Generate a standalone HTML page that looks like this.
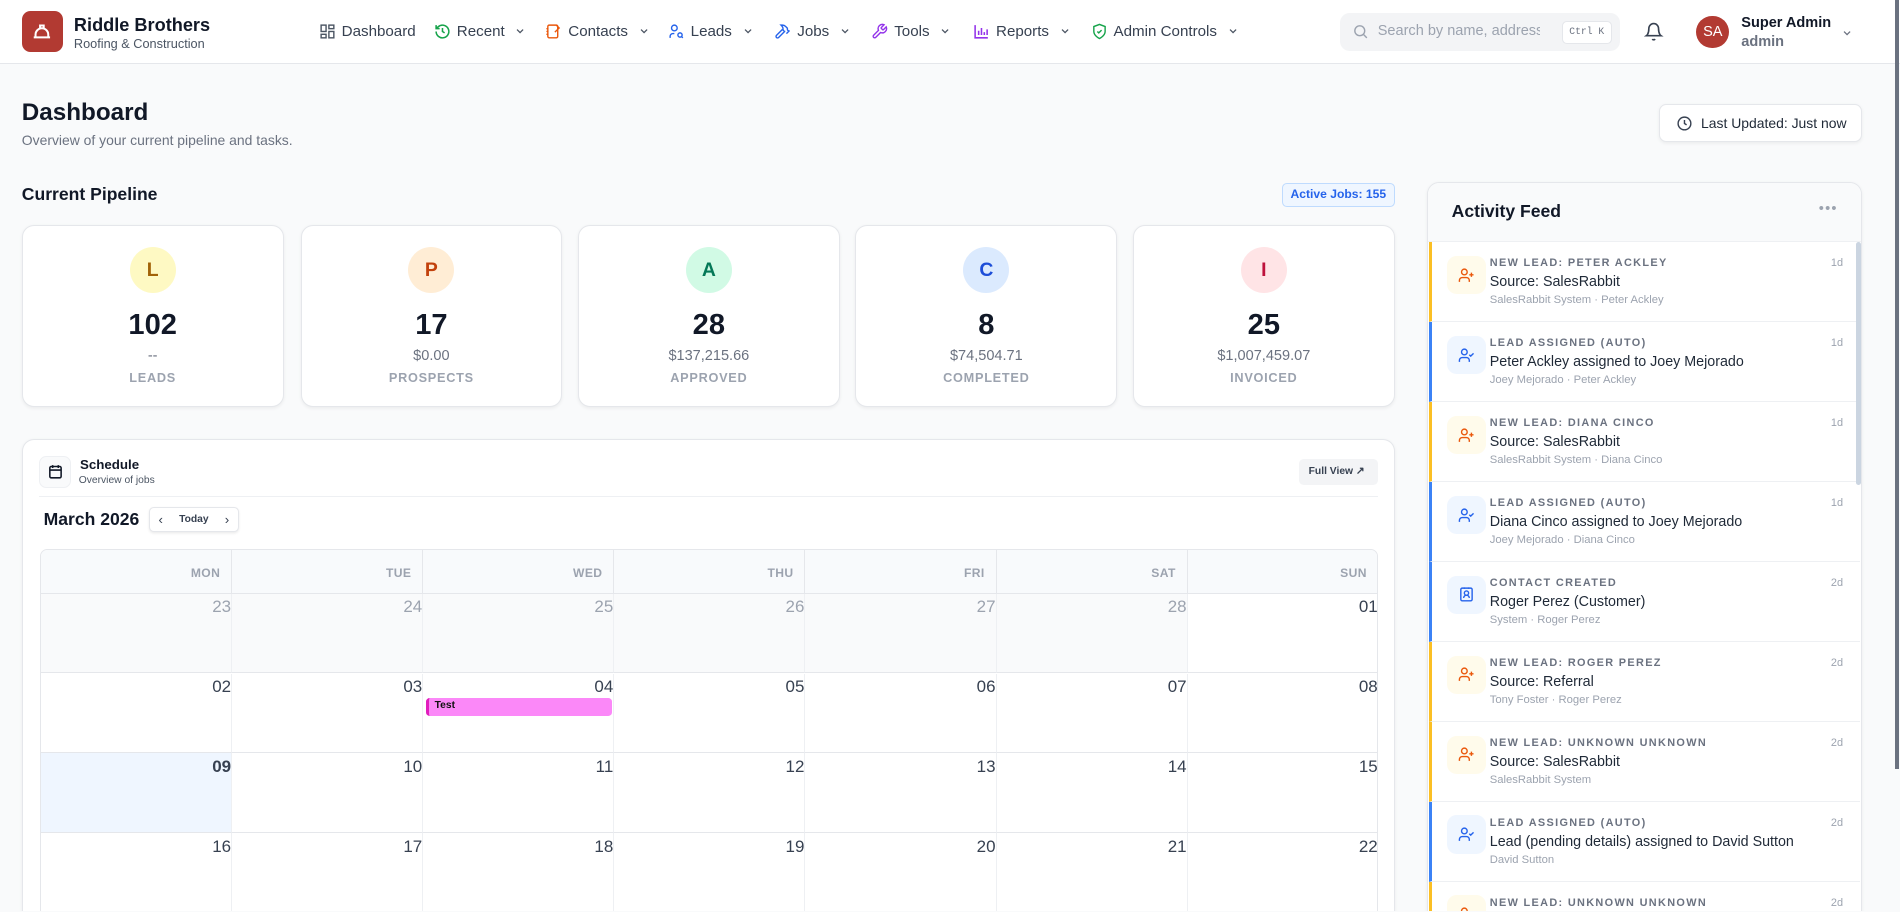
<!DOCTYPE html>
<html><head><meta charset="utf-8">
<style>
*{box-sizing:border-box;margin:0;padding:0}
html,body{width:1900px;height:912px;overflow:hidden;background:#f9fafb;font-family:"Liberation Sans",sans-serif;color:#111827}
#w{zoom:1.21173;width:1568px;height:752px;position:relative;overflow:hidden}
.a{position:absolute}
.hdr{left:0;top:0;width:1568px;height:53px;background:#fff;border-bottom:1px solid #e5e7eb}
.nav{top:19px;font-size:12.5px;color:#374151;display:flex;align-items:center;gap:5px;white-space:nowrap}
.nav svg{width:14px;height:14px}
.chev{width:10px!important;height:10px!important;margin-left:3px}
.card{background:#fff;border:1px solid #e5e7eb;border-radius:10px;box-shadow:0 1px 3px rgba(0,0,0,.06)}
.pc{top:186px;width:216px;height:150px;text-align:center}
.pc .c{width:38px;height:38px;border-radius:50%;margin:17px auto 0;font-size:16px;font-weight:bold;line-height:38px}
.pc .n{font-size:24px;font-weight:bold;margin-top:13px;color:#111827;line-height:28px}
.pc .m{font-size:12px;color:#6b7280;margin-top:4px}
.pc .l{font-size:10.5px;font-weight:bold;color:#9ca3af;letter-spacing:.6px;margin-top:5px}
.grid{left:33px;top:453px;width:1104px;height:299px;border:1px solid #e5e7eb;border-bottom:0;border-radius:6px 6px 0 0;overflow:hidden}
.dh{position:absolute;top:0;height:36px;background:#f8fafc;border-right:1px solid #e5e7eb;border-bottom:1px solid #e5e7eb;font-size:10px;font-weight:bold;color:#9ca3af;text-align:right;padding:13px 9px 0 0;letter-spacing:.3px}
.dc{position:absolute;height:66px;border-right:1px solid #eef0f3;border-bottom:1.5px solid #e5e7eb;font-size:14px;color:#374151;text-align:right;padding:3px 0 0 0}
.fi{left:1179px;width:356px;height:66px;border-bottom:1px solid #eef0f3;border-left:3px solid}
.fi .ic{position:absolute;left:13px;top:11px;width:32px;height:32px;border-radius:8px;display:flex;align-items:center;justify-content:center}
.fi .ic svg{width:14px;height:14px}
.fi .t{position:absolute;left:48px;top:12px;font-size:9px;font-weight:bold;color:#6b7280;letter-spacing:1.1px}
.fi .b{position:absolute;left:48px;top:26px;font-size:11.8px;color:#1f2937}
.fi .s{position:absolute;left:48px;top:43px;font-size:9.3px;color:#9ca3af}
.fi .d{position:absolute;right:14px;top:12px;font-size:9px;color:#9ca3af}
</style></head><body><div id="w">
<div class="a hdr"></div>
<div class="a" style="left:18px;top:9px;width:34px;height:34px;background:#b23a32;border-radius:7px;display:flex;align-items:center;justify-content:center">
<svg width="18" height="18" viewBox="0 0 24 24" fill="none" stroke="#fff" stroke-width="2.2"><path d="M3 18h18M5 18v-3a7 7 0 0 1 14 0v3M10 9V5h4v4"/></svg></div>
<div class="a" style="left:61px;top:12px;font-size:15px;font-weight:bold">Riddle Brothers</div>
<div class="a" style="left:61px;top:30px;font-size:10.5px;color:#4b5563">Roofing &amp; Construction</div>

<div class="a nav" style="left:263px"><svg viewBox="0 0 24 24" fill="none" stroke="#4b5563" stroke-width="2"><rect x="3" y="3" width="7" height="9"/><rect x="14" y="3" width="7" height="5"/><rect x="14" y="12" width="7" height="9"/><rect x="3" y="16" width="7" height="5"/></svg>Dashboard</div>
<div class="a nav" style="left:358px"><svg viewBox="0 0 24 24" fill="none" stroke="#16a34a" stroke-width="2.2"><path d="M3 12a9 9 0 1 0 3-6.7L3 8M3 3v5h5M12 7v5l3 2"/></svg>Recent<svg class="chev" viewBox="0 0 24 24" fill="none" stroke="#4b5563" stroke-width="2.5"><path d="M6 9l6 6 6-6"/></svg></div>
<div class="a nav" style="left:450px"><svg viewBox="0 0 24 24" fill="none" stroke="#ea580c" stroke-width="2"><rect x="4" y="3" width="14" height="18" rx="2"/><path d="M2 8h3M2 12h3M2 16h3M16 3l4 4-6 6"/></svg>Contacts<svg class="chev" viewBox="0 0 24 24" fill="none" stroke="#4b5563" stroke-width="2.5"><path d="M6 9l6 6 6-6"/></svg></div>
<div class="a nav" style="left:551px"><svg viewBox="0 0 24 24" fill="none" stroke="#2563eb" stroke-width="2"><circle cx="9" cy="7" r="4"/><path d="M3 21v-2a4 4 0 0 1 4-4h2"/><circle cx="17" cy="17" r="3"/><path d="M21 21l-2-2"/></svg>Leads<svg class="chev" viewBox="0 0 24 24" fill="none" stroke="#4b5563" stroke-width="2.5"><path d="M6 9l6 6 6-6"/></svg></div>
<div class="a nav" style="left:639px"><svg viewBox="0 0 24 24" fill="none" stroke="#2563eb" stroke-width="2"><path d="M15 12l-8.5 8.5a2.1 2.1 0 0 1-3-3L12 9M17.6 15L22 10.6M20.9 11.7l-1.3-1.3a2.4 2.4 0 0 1-.7-1.7V7.3L16.3 4.7A6 6 0 0 0 12 3h-2l1 1a6 6 0 0 1 1.8 4.3V10l2 2h1.2"/></svg>Jobs<svg class="chev" viewBox="0 0 24 24" fill="none" stroke="#4b5563" stroke-width="2.5"><path d="M6 9l6 6 6-6"/></svg></div>
<div class="a nav" style="left:719px"><svg viewBox="0 0 24 24" fill="none" stroke="#9333ea" stroke-width="2"><path d="M14.7 6.3a1 1 0 0 0 0 1.4l1.6 1.6a1 1 0 0 0 1.4 0l3.8-3.8a6 6 0 0 1-7.9 7.9l-6.9 6.9a2.1 2.1 0 0 1-3-3l6.9-6.9a6 6 0 0 1 7.9-7.9z"/></svg>Tools<svg class="chev" viewBox="0 0 24 24" fill="none" stroke="#4b5563" stroke-width="2.5"><path d="M6 9l6 6 6-6"/></svg></div>
<div class="a nav" style="left:803px"><svg viewBox="0 0 24 24" fill="none" stroke="#9333ea" stroke-width="2.2"><path d="M3 3v18h18M8 17V11M12 17V7M16 17v-4M20 17V9"/></svg>Reports<svg class="chev" viewBox="0 0 24 24" fill="none" stroke="#4b5563" stroke-width="2.5"><path d="M6 9l6 6 6-6"/></svg></div>
<div class="a nav" style="left:900px"><svg viewBox="0 0 24 24" fill="none" stroke="#16a34a" stroke-width="2"><path d="M12 22s8-4 8-10V5l-8-3-8 3v7c0 6 8 10 8 10z"/><path d="M9 12l2 2 4-4"/></svg>Admin Controls<svg class="chev" viewBox="0 0 24 24" fill="none" stroke="#4b5563" stroke-width="2.5"><path d="M6 9l6 6 6-6"/></svg></div>

<div class="a" style="left:1106px;top:11px;width:231px;height:31px;background:#f3f4f6;border-radius:8px"></div>
<svg class="a" style="left:1116px;top:19px" width="14" height="14" viewBox="0 0 24 24" fill="none" stroke="#9ca3af" stroke-width="2"><circle cx="11" cy="11" r="7"/><path d="M21 21l-5-5"/></svg>
<div class="a" style="left:1137px;top:19px;font-size:12px;color:#9ca3af;width:134px;overflow:hidden;white-space:nowrap">Search by name, address, phone</div>
<div class="a" style="left:1289px;top:17px;width:41px;height:19px;background:#fff;border:1px solid #e5e7eb;border-radius:4px;font-family:'Liberation Mono',monospace;font-size:8px;color:#6b7280;text-align:center;line-height:17px">Ctrl K</div>
<svg class="a" style="left:1357px;top:18px" width="16" height="16" viewBox="0 0 24 24" fill="none" stroke="#374151" stroke-width="2"><path d="M6 8a6 6 0 0 1 12 0c0 7 3 9 3 9H3s3-2 3-9M10.3 21a1.9 1.9 0 0 0 3.4 0"/></svg>
<div class="a" style="left:1400px;top:13px;width:27px;height:27px;border-radius:50%;background:#b23a32;color:#fff;font-size:12px;text-align:center;line-height:27px">SA</div>
<div class="a" style="left:1437px;top:12px;font-size:12px;font-weight:bold">Super Admin</div>
<div class="a" style="left:1437px;top:28px;font-size:12px;font-weight:bold;color:#6b7280">admin</div>
<svg class="a" style="left:1519px;top:22px" width="10" height="10" viewBox="0 0 24 24" fill="none" stroke="#6b7280" stroke-width="2.5"><path d="M6 9l6 6 6-6"/></svg>
<div class="a" style="left:1564px;top:0;width:3px;height:635px;background:#6b7280"></div>

<div class="a" style="left:18px;top:82px;font-size:20px;font-weight:bold">Dashboard</div>
<div class="a" style="left:18px;top:109px;font-size:11.5px;color:#6b7280">Overview of your current pipeline and tasks.</div>
<div class="a card" style="left:1369px;top:86px;width:168px;height:31px;border-radius:6px;display:flex;align-items:center;gap:7px;padding-left:13px;font-size:11.5px;color:#1f2937"><svg width="14" height="14" viewBox="0 0 24 24" fill="none" stroke="#374151" stroke-width="2"><circle cx="12" cy="12" r="9"/><path d="M12 7v5l3 2"/></svg>Last Updated: Just now</div>

<div class="a" style="left:18px;top:152px;font-size:14.5px;font-weight:bold">Current Pipeline</div>
<div class="a" style="left:1058px;top:151px;width:93px;height:20px;background:#eff6ff;border:1px solid #bfdbfe;border-radius:4px;font-size:10px;font-weight:bold;color:#2563eb;text-align:center;line-height:18px">Active Jobs: 155</div>

<div class="a card pc" style="left:18px"><div class="c" style="background:#fef9c3;color:#a16207">L</div><div class="n">102</div><div class="m">--</div><div class="l">LEADS</div></div>
<div class="a card pc" style="left:248px"><div class="c" style="background:#ffedd5;color:#c2410c">P</div><div class="n">17</div><div class="m">$0.00</div><div class="l">PROSPECTS</div></div>
<div class="a card pc" style="left:477px"><div class="c" style="background:#d1fae5;color:#047857">A</div><div class="n">28</div><div class="m">$137,215.66</div><div class="l">APPROVED</div></div>
<div class="a card pc" style="left:706px"><div class="c" style="background:#dbeafe;color:#1d4ed8">C</div><div class="n">8</div><div class="m">$74,504.71</div><div class="l">COMPLETED</div></div>
<div class="a card pc" style="left:935px"><div class="c" style="background:#ffe4e6;color:#be123c">I</div><div class="n">25</div><div class="m">$1,007,459.07</div><div class="l">INVOICED</div></div>

<div class="a card" style="left:18px;top:362px;width:1133px;height:390px;border-bottom:0;border-radius:10px 10px 0 0"></div>
<div class="a" style="left:32px;top:376px;width:27px;height:27px;border-radius:6px;background:#f9fafb;border:1px solid #eef0f3;display:flex;align-items:center;justify-content:center"><svg width="14" height="14" viewBox="0 0 24 24" fill="none" stroke="#111827" stroke-width="2.2"><rect x="4" y="5" width="16" height="16" rx="2"/><path d="M8 3v4M16 3v4M4 10h16"/></svg></div>
<div class="a" style="left:66px;top:377px;font-size:11px;font-weight:bold">Schedule</div>
<div class="a" style="left:65px;top:392px;font-size:8.5px;color:#4b5563">Overview of jobs</div>
<div class="a" style="left:1072px;top:379px;width:65px;height:21px;background:#f3f4f6;border-radius:4px;font-size:8.5px;font-weight:bold;color:#374151;line-height:21px;padding-left:8px">Full View ↗</div>
<div class="a" style="left:32px;top:409px;width:1105px;height:1px;background:#eef0f3"></div>
<div class="a" style="left:36px;top:420px;font-size:14.5px;font-weight:bold">March 2026</div>
<div class="a" style="left:123px;top:418px;width:74px;height:21px;border:1px solid #e5e7eb;border-radius:4px;background:#fff;box-shadow:0 1px 2px rgba(0,0,0,.08);font-size:8.5px;font-weight:bold;color:#374151;line-height:19px">
<span style="position:absolute;left:7px;font-size:11px;font-weight:normal">‹</span><span style="position:absolute;left:24px">Today</span><span style="position:absolute;right:7px;font-size:11px;font-weight:normal">›</span></div>

<div class="a grid" id="g"></div>

<div class="a card" style="left:1178px;top:150px;width:359px;height:602px;background:#fff;overflow:hidden;border-bottom:0;border-radius:10px 10px 0 0"><div style="height:49px;background:#f9fafb;border-bottom:1px solid #eef0f3"></div></div>
<div class="a" style="left:1198px;top:166px;font-size:14.5px;font-weight:bold">Activity Feed</div>
<div class="a" style="left:1501px;top:166px;font-size:12px;color:#9ca3af;letter-spacing:1px">•••</div>
<div id="f"></div>
<div class="a" style="left:1532px;top:200px;width:4px;height:200px;background:#cbd5e1;border-radius:2px"></div>
</div>
<script>
var g=document.getElementById('g'),days=['MON','TUE','WED','THU','FRI','SAT','SUN'],cw=1104/7,h='';
for(var i=0;i<7;i++)h+='<div class="dh" style="left:'+(i*cw)+'px;width:'+cw+'px">'+days[i]+'</div>';
var nums=[['23','24','25','26','27','28','01'],['02','03','04','05','06','07','08'],['09','10','11','12','13','14','15'],['16','17','18','19','20','21','22']];
for(var r=0;r<4;r++)for(var c=0;c<7;c++){var bg=r==0&&c<6?'#f9fafb':(r==2&&c==0?'#eff6ff':'#fff');var col=r==0&&c<6?'#9ca3af':'#374151';var fw=r==2&&c==0?'bold':'normal';
h+='<div class="dc" style="left:'+(c*cw)+'px;top:'+(36+r*66)+'px;width:'+cw+'px;background:'+bg+';color:'+col+';font-weight:'+fw+'">'+nums[r][c]+'</div>';}
h+='<div style="position:absolute;left:'+(2*cw+2)+'px;top:122px;width:'+(cw-4)+'px;height:15px;background:#fb88f8;border-left:3px solid #e11dbd;border-radius:3px;font-size:8.5px;font-weight:bold;padding:2px 0 0 5px;color:#111">Test</div>';
g.innerHTML=h;
var add='<svg viewBox="0 0 24 24" fill="none" stroke="#ea580c" stroke-width="2"><circle cx="9" cy="7" r="4"/><path d="M2 21v-2a4 4 0 0 1 4-4h6a4 4 0 0 1 4 4v2M19 8v6M22 11h-6"/></svg>';
var chk='<svg viewBox="0 0 24 24" fill="none" stroke="#2563eb" stroke-width="2"><circle cx="9" cy="7" r="4"/><path d="M2 21v-2a4 4 0 0 1 4-4h6a4 4 0 0 1 4 4v2M16 11l2 2 4-4"/></svg>';
var con='<svg viewBox="0 0 24 24" fill="none" stroke="#2563eb" stroke-width="2"><rect x="4" y="3" width="16" height="18" rx="2"/><circle cx="12" cy="10" r="3"/><path d="M8 17a4 4 0 0 1 8 0M9 2v2M15 2v2"/></svg>';
var it=[['y','NEW LEAD: PETER ACKLEY','Source: SalesRabbit','SalesRabbit System · Peter Ackley','1d'],
['b','LEAD ASSIGNED (AUTO)','Peter Ackley assigned to Joey Mejorado','Joey Mejorado · Peter Ackley','1d'],
['y','NEW LEAD: DIANA CINCO','Source: SalesRabbit','SalesRabbit System · Diana Cinco','1d'],
['b','LEAD ASSIGNED (AUTO)','Diana Cinco assigned to Joey Mejorado','Joey Mejorado · Diana Cinco','1d'],
['c','CONTACT CREATED','Roger Perez (Customer)','System · Roger Perez','2d'],
['y','NEW LEAD: ROGER PEREZ','Source: Referral','Tony Foster · Roger Perez','2d'],
['y','NEW LEAD: UNKNOWN UNKNOWN','Source: SalesRabbit','SalesRabbit System','2d'],
['b','LEAD ASSIGNED (AUTO)','Lead (pending details) assigned to David Sutton','David Sutton','2d']];
var f='';it.forEach(function(x,i){var y=x[0]=='y';f+='<div class="a fi" style="top:'+(200+i*66)+'px;border-left-color:'+(y?'#fbbf24':'#3b82f6')+'"><div class="ic" style="background:'+(y?'#fffbeb':'#eff6ff')+'">'+(y?add:(x[0]=='c'?con:chk))+'</div><div class="t">'+x[1]+'</div><div class="b">'+x[2]+'</div><div class="s">'+x[3]+'</div><div class="d">'+x[4]+'</div></div>';});
f+='<div class="a fi" style="top:728px;height:24px;border-bottom:0;border-left-color:#fbbf24;overflow:hidden"><div class="ic" style="background:#fffbeb">'+add+'</div><div class="t">NEW LEAD: UNKNOWN UNKNOWN</div><div class="d">2d</div></div>';
document.getElementById('f').outerHTML=f;
</script>
</body></html>
